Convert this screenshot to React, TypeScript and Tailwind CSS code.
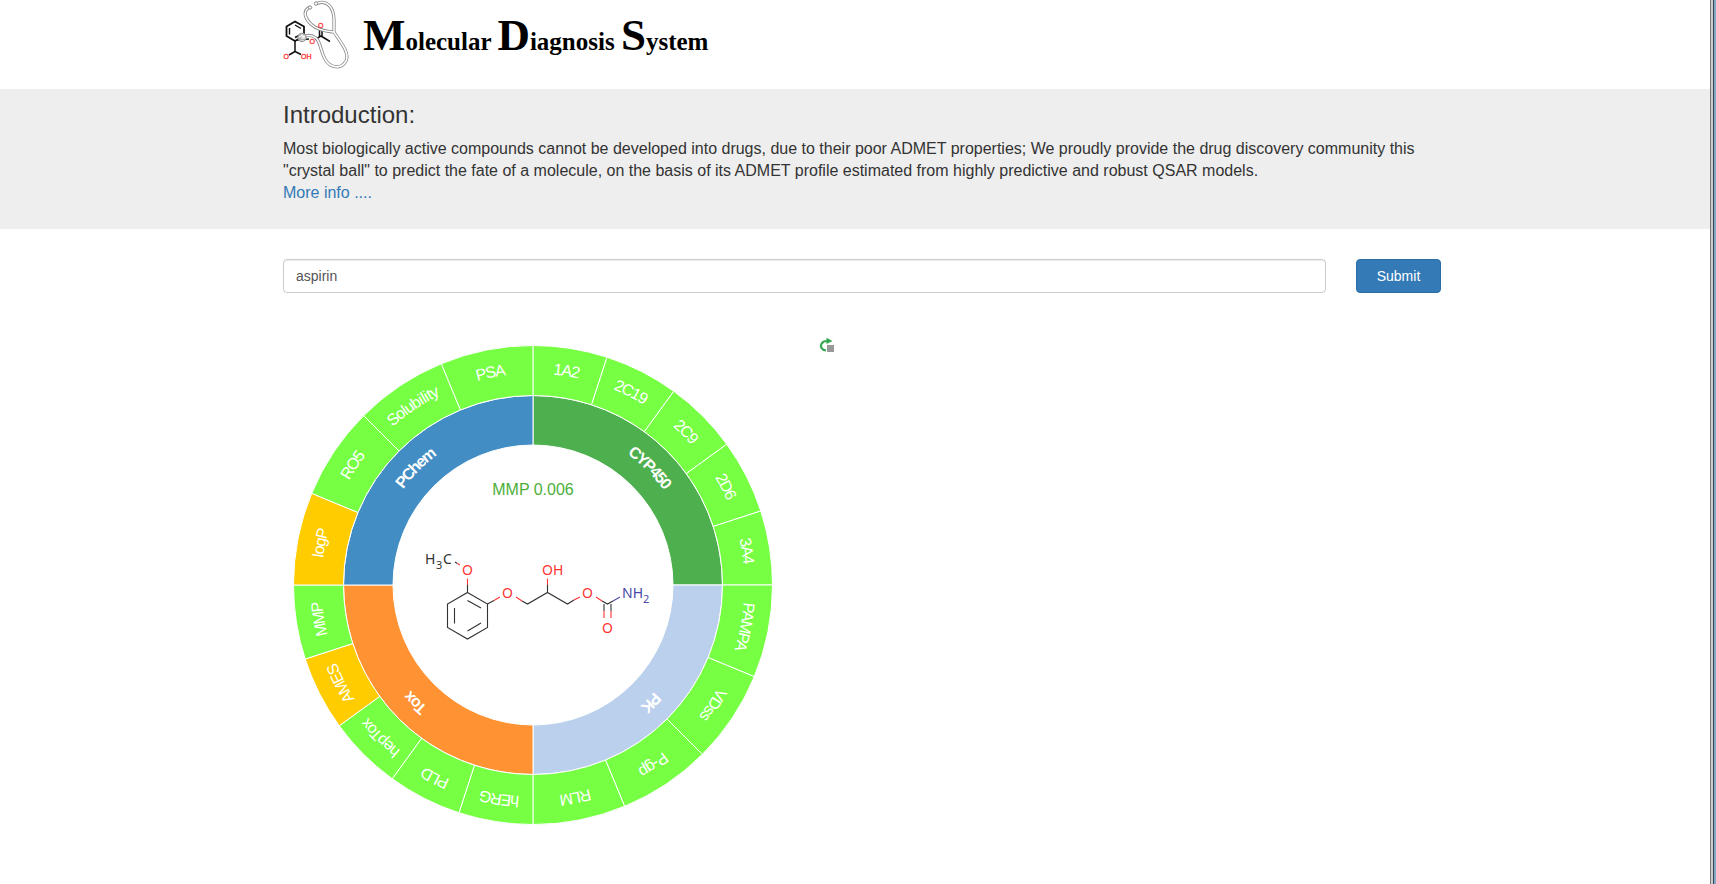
import { useId } from 'react';

const GREEN = '#77ff44';
const AMBER = '#ffcc00';

type Leaf = { label: string; color: string };
type Group = { label: string; color: string; leaves: Leaf[] };

const leaf = (label: string, color = GREEN): Leaf => ({ label, color });

const groups: Group[] = [
  { label: 'CYP450', color: '#4daf4d', leaves: [leaf('1A2'), leaf('2C19'), leaf('2C9'), leaf('2D6'), leaf('3A4')] },
  { label: 'PK', color: '#bbd0ed', leaves: [leaf('PAMPA'), leaf('VDss'), leaf('P-gp'), leaf('RLM')] },
  { label: 'Tox', color: '#ff9233', leaves: [leaf('hERG'), leaf('PLD'), leaf('hepTox'), leaf('AMES', AMBER), leaf('MMP')] },
  { label: 'PChem', color: '#428dc3', leaves: [leaf('logP', AMBER), leaf('RO5'), leaf('Solubility'), leaf('PSA')] },
];

function point(radius: number, degrees: number) {
  const a = ((degrees - 90) * Math.PI) / 180;
  return `${(radius * Math.cos(a)).toFixed(3)} ${(radius * Math.sin(a)).toFixed(3)}`;
}

type SectorProps = { inner: number; outer: number; from: number; to: number; color: string; label: string; bold?: boolean };

function Sector({ inner, outer, from, to, color, label, bold }: SectorProps) {
  const id = useId();
  const shape = `M${point(outer, from)}A${outer} ${outer} 0 0 1 ${point(outer, to)}L${point(inner, to)}A${inner} ${inner} 0 0 0 ${point(inner, from)}Z`;
  const arc = `M${point(outer, from)}A${outer} ${outer} 0 0 1 ${point(outer, to)}`;
  return (
    <g>
      <path d={shape} fill={color} stroke="#fff" />
      <path id={id} d={arc} fill="none" />
      <text dy="28" textAnchor="middle" fill="#fff" className={bold ? 'text-[16px] font-bold' : 'text-[16px]'}>
        <textPath href={`#${id}`} startOffset="50%">{label}</textPath>
      </text>
    </g>
  );
}

function Molecule() {
  return (
    <g transform="translate(-123 -115)" fontFamily="'Noto Sans', sans-serif" fontSize="14">
      <g fill="none" stroke="#333" strokeWidth="1.1">
        <path d="M57.5 122.5L77.5 134V157.5L57.5 169L37.5 157.5V134Z" />
        <path d="M57.500 130.500L71 138M71 153L57.500 161M44.500 138V153.500" />
        <path d="M57.500 122.500V115M77.500 134L84 130.500M112 131L117.500 134L137.500 122.500L157.500 134L164 130M137.500 122.500V115M192 131L197.500 134L203 131M194 134V141M201 134V141M45 92L47.500 93.500" />
      </g>
      <g fill="none" stroke="#ff3333" strokeWidth="1.1">
        <path d="M57.500 115V108.500M84 130.500L90 127M106 127L112 131M164 130L170 127M186 127L192 131M137.500 115V108.500M194 141V148M201 141V148M47.500 93.500L50 95" />
      </g>
      <path d="M203 131L210 127" stroke="#4848a8" strokeWidth="1.1" />
      <g fill="#333">
        <text x="15" y="94">H</text>
        <text x="26" y="99" fontSize="11">3</text>
        <text x="33" y="94">C</text>
      </g>
      <g fill="#ff3333">
        <text x="57.500" y="105" textAnchor="middle">O</text>
        <text x="97.500" y="128" textAnchor="middle">O</text>
        <text x="132" y="105">OH</text>
        <text x="177.500" y="128" textAnchor="middle">O</text>
        <text x="197.500" y="163" textAnchor="middle">O</text>
      </g>
      <g fill="#4848a8">
        <text x="212" y="128">NH</text>
        <text x="233" y="133" fontSize="11">2</text>
      </g>
    </g>
  );
}

function Wheel() {
  return (
    <svg className="h-[500px] w-[500px] shrink-0" viewBox="-250 -250 500 500" role="img" aria-label="ADMET profile">
      {groups.map((g, i) => {
        const start = i * 90;
        const step = 90 / g.leaves.length;
        return (
          <g key={g.label}>
            <Sector inner={140} outer={189.5} from={start} to={start + 90} color={g.color} label={g.label} bold />
            {g.leaves.map((l, j) => (
              <Sector key={l.label} inner={189.5} outer={239.5} from={start + j * step} to={start + (j + 1) * step} color={l.color} label={l.label} />
            ))}
          </g>
        );
      })}
      <text x="0" y="-90" textAnchor="middle" fill="#4daf3a" className="text-[16px]">MMP 0.006</text>
      <Molecule />
    </svg>
  );
}

function Logo() {
  return (
    <svg className="h-[70px] w-[70px] shrink-0" viewBox="0 0 70 70" aria-hidden="true">
      <g fill="none" stroke="#111" strokeWidth="1.800" strokeLinejoin="round">
        <path d="M12 21.500L21 26.500V36L12 41L3.500 36V26.500Z" />
        <path d="M12 25L18 28.500M18 34.500L12 37.500M6.500 28V34.500" strokeWidth="1.400" />
        <path d="M12 41V51.500L6 55M12 51.500L18 54.500M14 40L26 39M32 39.500L38 36L47 41.500M36.500 36V29M39 36V29" strokeWidth="1.500" />
      </g>
      <g fill="none" strokeLinecap="round">
        <path d="M25 8C20 12 22 19 29 25C36 31 44 31 50 32M34 3.500C44 -1 51 8 51 20V32C58 43 67 53 63 61C58 70 47 68 42 59C37 50 38 43 33 38C29 35 24 35 20 37" stroke="#888" strokeWidth="3.200" />
        <path d="M25 8C20 12 22 19 29 25C36 31 44 31 50 32M34 3.500C44 -1 51 8 51 20V32C58 43 67 53 63 61C58 70 47 68 42 59C37 50 38 43 33 38C29 35 24 35 20 37" stroke="#fff" strokeWidth="1.600" />
      </g>
      <circle cx="19" cy="37.500" r="4" fill="#ffffffaa" stroke="#999" strokeWidth="1.300" />
      <circle cx="27" cy="7.500" r="1.700" fill="#fff" stroke="#888" />
      <circle cx="33" cy="3.500" r="1.700" fill="#fff" stroke="#888" />
      <g fill="#f33" stroke="#f33" strokeWidth="0.300" fontSize="7" fontFamily="'Liberation Sans', sans-serif">
        <text x="0.500" y="59">O</text>
        <text x="18" y="58.500">OH</text>
        <text x="26.500" y="44">O</text>
        <text x="35" y="28">O</text>
      </g>
    </svg>
  );
}

export default function App() {
  return (
    <div className="flex min-h-screen bg-white font-['Liberation_Sans',Arial,sans-serif] text-[#333]">
      <div className="min-w-0 flex-1">
        <header className="mx-auto flex h-[89px] max-w-[1172px] items-start gap-[10px] pl-[14px]">
          <Logo />
          <h1 className="pt-[10px] font-['Liberation_Serif',serif] text-[25px] leading-[50px] font-bold whitespace-nowrap text-black">
            <span className="text-[45px]">M</span>olecular <span className="text-[45px]">D</span>iagnosis{' '}
            <span className="text-[45px]">S</span>ystem
          </h1>
        </header>

        <section className="bg-[#eee]">
          <div className="mx-auto h-[140px] max-w-[1172px] pt-3 pl-[14px]">
            <h2 className="mb-[9px] text-[24px] leading-[28px]">Introduction:</h2>
            <p className="text-[16px] leading-[22px]">
              Most biologically active compounds cannot be developed into drugs, due to their poor ADMET properties; We
              proudly provide the drug discovery community this "crystal ball" to predict the fate of a molecule, on the
              basis of its ADMET profile estimated from highly predictive and robust QSAR models.
              <br />
              <a href="#more" className="text-[#337ab7]">More info ....</a>
            </p>
          </div>
        </section>

        <main className="mx-auto max-w-[1172px] pt-[30px] pl-[14px]">
          <form className="flex gap-[30px]" onSubmit={(e) => e.preventDefault()}>
            <input
              type="text"
              aria-label="Molecule"
              defaultValue="aspirin"
              className="h-[34px] min-w-0 flex-1 rounded border border-[#ccc] px-3 text-[14px] text-[#555] shadow-[inset_0_1px_1px_rgba(0,0,0,0.075)]"
            />
            <button type="submit" className="h-[34px] w-[85px] rounded border border-[#2e6da4] bg-[#337ab7] text-[14px] text-white">
              Submit
            </button>
          </form>
          <div className="mt-[42px] flex items-start gap-9">
            <Wheel />
            <button type="button" aria-label="Reset" className="mt-[2px]">
              <svg className="block h-4 w-4" viewBox="0 0 16 16">
                <path d="M7 13.500C2.500 13 1 9.500 2.500 6.800C3.500 4.800 5.500 4 8 4" fill="none" stroke="#33a853" strokeWidth="2.200" />
                <path d="M7.500 0.800L13.500 4L7.500 7Z" fill="#33a853" />
                <rect x="8" y="8" width="7" height="7" fill="#999" />
              </svg>
            </button>
          </div>
        </main>
      </div>
      <div className="w-[3px] shrink-0 border-l border-[#777] bg-[#ccc]" />
      <div className="w-[3px] shrink-0 border-l border-[#345] bg-[#82a8c6]" />
    </div>
  );
}
